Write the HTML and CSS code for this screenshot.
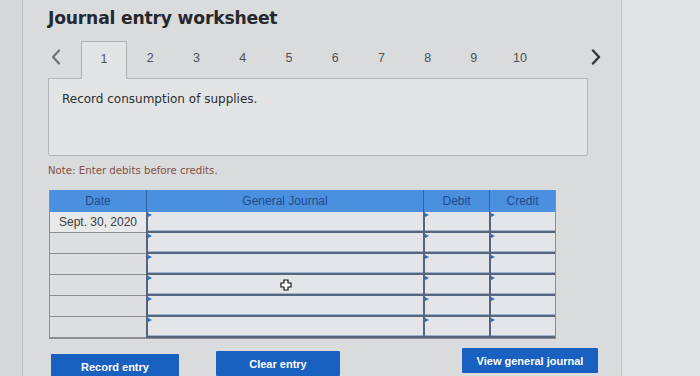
FILE: index.html
```html
<!DOCTYPE html>
<html>
<head>
<meta charset="utf-8">
<link rel="stylesheet" href="styles.css">
</head>
<body>
<div class="page">
  <div class="main">
    <h1 class="title">Journal entry worksheet</h1>
    <div class="tabs">
      <span class="arrow left"><svg width="12" height="16" viewBox="0 0 12 16"><path d="M9 1.5 L3 8 L9 14.5" fill="none" stroke="#707378" stroke-width="2.2" stroke-linecap="round" stroke-linejoin="round"/></svg></span>
      <span class="tab active">1</span>
      <span class="tab">2</span>
      <span class="tab">3</span>
      <span class="tab">4</span>
      <span class="tab">5</span>
      <span class="tab">6</span>
      <span class="tab">7</span>
      <span class="tab">8</span>
      <span class="tab">9</span>
      <span class="tab">10</span>
      <span class="arrow right"><svg width="12" height="16" viewBox="0 0 12 16"><path d="M3 1.5 L9 8 L3 14.5" fill="none" stroke="#34363a" stroke-width="2.4" stroke-linecap="round" stroke-linejoin="round"/></svg></span>
    </div>
    <div class="prompt">Record consumption of supplies.</div>
    <p class="note">Note: Enter debits before credits.</p>
    <div class="journal">
      <div class="hd">Date</div>
      <div class="hd">General Journal</div>
      <div class="hd">Debit</div>
      <div class="hd">Credit</div>

      <div class="date filled">Sept. 30, 2020</div>
      <div class="inp"></div><div class="inp"></div><div class="inp"></div>

      <div class="date"></div>
      <div class="inp"></div><div class="inp"></div><div class="inp"></div>

      <div class="date"></div>
      <div class="inp"></div><div class="inp"></div><div class="inp"></div>

      <div class="date"></div>
      <div class="inp cursor-cell">
        <svg class="cursor" width="12" height="12" viewBox="0 0 12 12"><path d="M4 1 H8 V4 H11 V8 H8 V11 H4 V8 H1 V4 H4 Z" fill="#fff" stroke="#111" stroke-width="1.2"/></svg>
      </div><div class="inp"></div><div class="inp"></div>

      <div class="date"></div>
      <div class="inp"></div><div class="inp"></div><div class="inp"></div>

      <div class="date"></div>
      <div class="inp"></div><div class="inp"></div><div class="inp"></div>
    </div>
    <div class="buttons">
      <button class="btn record">Record entry</button>
      <button class="btn clear">Clear entry</button>
      <button class="btn view">View general journal</button>
    </div>
  </div>
  <div class="side"></div>
</div>
</body>
</html>
```
FILE: styles.css
```css
html, body {
  margin: 0;
  padding: 0;
  height: 376px;
  overflow: hidden;
}
body {
  background: #d6d8da;
  font-family: "Liberation Sans", Arial, sans-serif;
}
.page {
  display: flex;
  height: 376px;
}
.main {
  margin-left: 22px;
  width: 600px;
  border-left: 1px solid #bfc1c3;
  border-right: 1px solid #c4c6c8;
  background: #d9dbdd;
  padding-left: 25px;
  box-sizing: border-box;
}
.side {
  flex: 1;
  background: #e1e3e5;
}
.title {
  margin: 7px 0 0 0;
  font-family: "DejaVu Sans", Verdana, sans-serif;
  font-weight: bold;
  font-size: 17.2px;
  line-height: 23px;
  color: #26282e;
  letter-spacing: -0.2px;
}
.tabs {
  display: flex;
  align-items: stretch;
  height: 37px;
  margin-top: 11px;
  position: relative;
  z-index: 1;
}
.arrow {
  width: 33px;
  display: flex;
  align-items: flex-start;
  padding-top: 8px;
  padding-left: 2px;
  box-sizing: border-box;
}
.arrow.right {
  margin-left: 45px;
}
.tab {
  width: 46.5px;
  text-align: center;
  font-size: 12.5px;
  line-height: 34px;
  color: #4f5154;
  box-sizing: border-box;
}
.tab.active {
  border: 1px solid #aeb0b2;
  border-bottom: none;
  background: #e2e4e6;
  height: 38px;
}
.prompt {
  width: 540px;
  height: 78px;
  box-sizing: border-box;
  border: 1px solid #b3b5b7;
  border-radius: 0 0 3px 3px;
  background: #e2e4e6;
  padding: 13px 0 0 13px;
  font-family: "DejaVu Sans", Verdana, sans-serif;
  font-size: 12px;
  color: #2c2e32;
}
.note {
  margin: 8px 0 0 0;
  font-family: "DejaVu Sans", Verdana, sans-serif;
  font-size: 10.2px;
  line-height: 14px;
  color: #84503f;
}
.journal {
  display: grid;
  grid-template-columns: 96px 277px 66px 66px;
  grid-auto-rows: 21px;
  grid-template-rows: 22px;
  width: 505px;
  margin-top: 12px;
  margin-left: 1px;
  border: 1px solid #8c8e92;
  border-top: none;
}
.hd {
  background: #4b8fdf;
  color: #1f4b8c;
  font-size: 12px;
  text-align: center;
  line-height: 22px;
  border-left: 1px solid #2d62a8;
}
.hd:first-child {
  border-left: none;
}
.date {
  border-bottom: 1px solid #8a8c90;
  background: #dcdee0;
  font-size: 12px;
  color: #3a3c40;
  text-align: center;
  line-height: 20px;
}
.date.filled {
  background: #e6e8ea;
}
.inp {
  position: relative;
  background: #e3e5e8;
  border-left: 2px solid #56657c;
  border-bottom: 2px solid #56657c;
  box-shadow: inset 0 -1px 0 #9fb3cf;
  display: flex;
  align-items: center;
  justify-content: center;
}
.inp::before {
  content: "";
  position: absolute;
  left: 0;
  top: 1px;
  border-left: 4px solid #2f6bc6;
  border-top: 2.5px solid transparent;
  border-bottom: 2.5px solid transparent;
}
.cursor {
  display: block;
}
.buttons {
  display: flex;
  align-items: flex-start;
  margin-top: 10px;
  margin-left: 3px;
}
.btn {
  border: none;
  background: #1861c0;
  color: #fff;
  font-family: "Liberation Sans", Arial, sans-serif;
  font-weight: bold;
  font-size: 11px;
  border-radius: 1px;
  padding: 0;
  height: 25px;
}
.btn.record {
  width: 128px;
  margin-top: 5px;
}
.btn.clear {
  width: 124px;
  margin-left: 37px;
  margin-top: 2px;
}
.btn.view {
  width: 136px;
  margin-left: 122px;
  margin-top: -1px;
}
```
